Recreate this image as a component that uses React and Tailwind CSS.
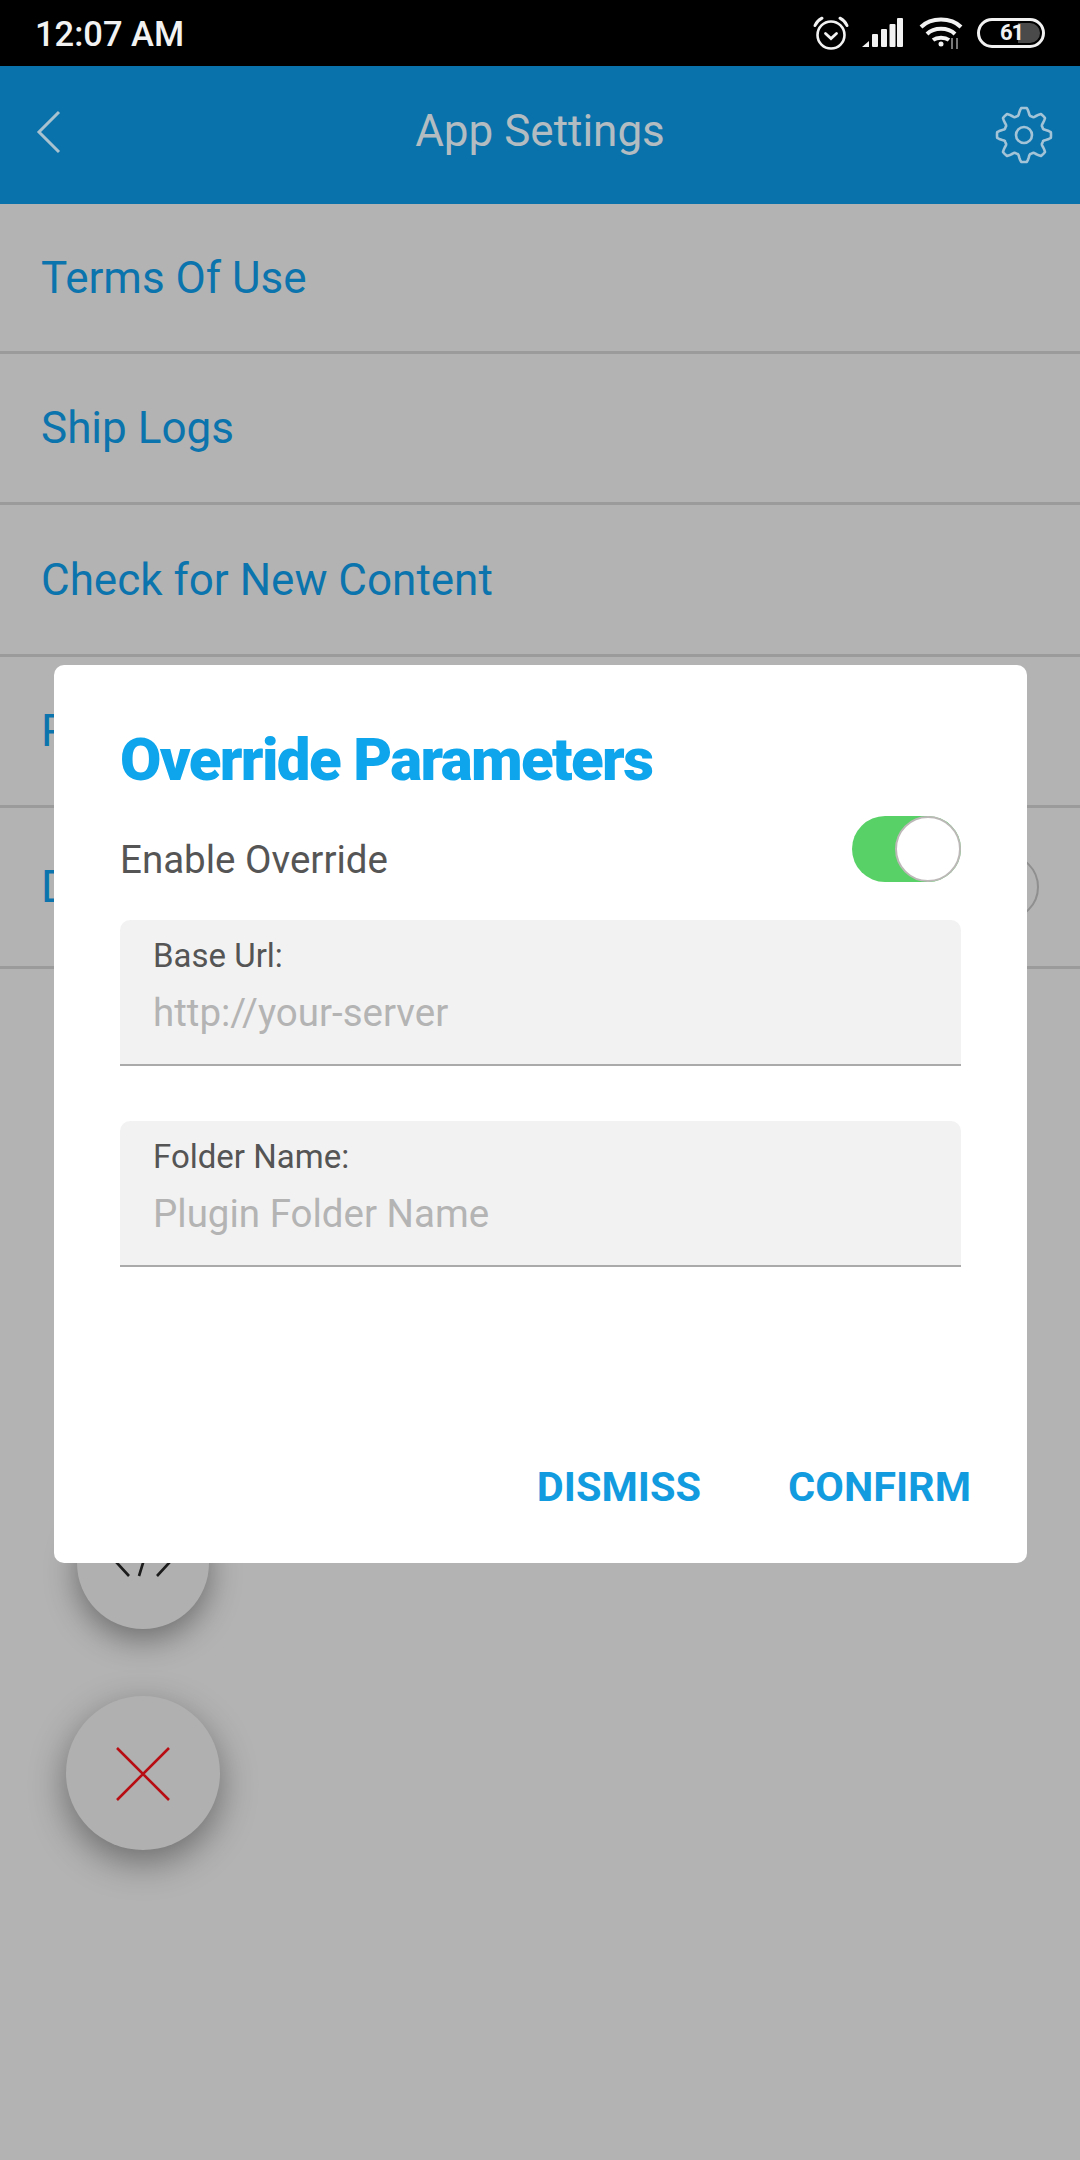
import { useMemo } from "react";

const rows = [
  { label: "Terms Of Use", height: "h-[150px]" },
  { label: "Ship Logs", height: "h-[151px]" },
  { label: "Check for New Content", height: "h-[152px]" },
  { label: "P", height: "h-[151px]" },
];

function gearPath() {
  // 8 rounded teeth around (28, 28)
  let d = "";
  for (let i = 0; i <= 360; i += 3) {
    const a = (i * Math.PI) / 180;
    const wave = Math.max(-1, Math.min(1, Math.cos(8 * a) * 1.5));
    const r = 23.5 + wave * 3.5;
    const x = 28 + r * Math.sin(a);
    const y = 28 - r * Math.cos(a);
    d += `${i === 0 ? "M" : "L"}${x.toFixed(2)} ${y.toFixed(2)} `;
  }
  return d + "Z";
}

function Gear() {
  const d = useMemo(() => gearPath(), []);
  return (
    <svg width="58" height="58" viewBox="-1 -1 58 58" fill="none" stroke="#a3c3d6" strokeWidth="2.6">
      <path d={d} strokeLinejoin="round" />
      <circle cx="28" cy="28" r="8" />
    </svg>
  );
}

function StatusIcons() {
  return (
    <div className="flex items-center">
      <svg width="36" height="34" viewBox="0 0 36 34" fill="none" stroke="#f2f2f2" strokeWidth="2.6" strokeLinecap="round">
        <circle cx="18" cy="19" r="13.5" />
        <path d="M12.5 17.5l5.5 5 5.5-5" strokeWidth="2.8" />
        <path d="M2 9.5C3.5 6 5.500 4 9 2.200" strokeWidth="3" />
        <path d="M34 9.5C32.500 6 30.500 4 27 2.200" strokeWidth="3" />
      </svg>
      <svg className="ml-[13px]" width="41" height="30" viewBox="0 0 41 30" fill="#f2f2f2">
        <path d="M0 29l7-6v6z" />
        <rect x="10" y="16" width="6" height="13" rx="1" />
        <rect x="19" y="11" width="6" height="18" rx="1" />
        <rect x="27.500" y="6" width="6" height="23" rx="1" />
        <rect x="35" y="0" width="6" height="29" rx="1" />
      </svg>
      <svg className="ml-[16px]" width="44" height="32" viewBox="0 0 44 32" fill="none" stroke="#f2f2f2" strokeWidth="4">
        <path d="M2 10C12 0 32 0 42 10" />
        <path d="M8 17C15 10 29 10 36 17" />
        <path d="M14 23C18 20 26 20 30 23" />
        <circle cx="22" cy="27" r="2.500" fill="#f2f2f2" stroke="none" />
        <path d="M33 21v11M38 21v11" stroke="#777" strokeWidth="2" />
      </svg>
      <div className="relative ml-[14px] h-[30px] w-[68px] overflow-hidden rounded-full border-[3px] border-[#f2f2f2]">
        <div className="absolute bottom-[2px] right-[2px] top-[2px] w-[22px] rounded-r-full bg-[#4a4a4a]" />
        <span className="absolute left-[20px] top-0 text-[22px] font-bold leading-[24px] tracking-[-1px] text-[#f2f2f2]">61</span>
      </div>
    </div>
  );
}

export default function App() {
  return (
    <div className="relative h-[2160px] w-[1080px] overflow-hidden bg-[#b3b3b3] font-['Roboto',sans-serif]">
      <div className="flex h-[66px] items-center justify-between bg-black pl-[35px] pr-[35px]">
        <span className="mt-[3px] text-[34.500px] font-medium text-[#f2f2f2]">12:07 AM</span>
        <StatusIcons />
      </div>

      <div className="grid h-[138px] grid-cols-[1fr_auto_1fr] items-center bg-[#0a72ab] px-[27px]">
        <svg className="mb-[6px] ml-[9px]" width="26" height="44" viewBox="0 0 26 44" fill="none" stroke="#a9c2d0" strokeWidth="3">
          <path d="M23 2L3 22l20 20" />
        </svg>
        <span className="mb-[9px] text-[44px] text-[#b3bcc1]">App Settings</span>
        <div className="flex justify-end">
          <Gear />
        </div>
      </div>

      {rows.map((row) => (
        <div key={row.label} className={`flex ${row.height} items-center border-b-[3px] border-[#9b9b9b] pl-[41px] text-[44px] text-[#0c74ad]`}>
          {row.label}
        </div>
      ))}
      <div className="flex h-[161px] items-center justify-between border-b-[3px] border-[#9b9b9b] pl-[41px] pr-[41px] text-[44px] text-[#0c74ad]">
        <span>D</span>
        <div className="h-[66px] w-[66px] rounded-full border-2 border-[#8f8f8f]" />
      </div>

      <div className="absolute left-[77px] top-[1497px] flex h-[132px] w-[132px] items-center justify-center rounded-full bg-[#b0b0b0] shadow-[0_10px_32px_rgba(0,0,0,0.4)]">
        <svg width="56" height="28" viewBox="0 0 56 28" fill="none" stroke="#1c1c1c" strokeWidth="2.6">
          <path d="M14 1L2 14l12 13M42 1l12 13-12 13M32 1l-8 26" />
        </svg>
      </div>
      <div className="absolute left-[66px] top-[1696px] flex h-[154px] w-[154px] items-center justify-center rounded-full bg-[#b0b0b0] shadow-[0_12px_36px_rgba(0,0,0,0.4)]">
        <svg className="mt-[2px]" width="54" height="54" viewBox="0 0 54 54" fill="none" stroke="#b80d12" strokeWidth="2.6">
          <path d="M1 1l52 52M53 1L1 53" />
        </svg>
      </div>

      <div className="absolute left-[54px] top-[665px] flex h-[898px] w-[973px] flex-col rounded-[10px] bg-white pl-[66px] pr-[66px]">
        <h1 className="mt-[58px] text-[60px] font-black leading-[74px] tracking-[-1.650px] text-[#0ea5ec]">Override Parameters</h1>
        <div className="mt-[19px] flex h-[66px] items-center justify-between">
          <span className="mt-[22px] text-[38.500px] text-[#555555]">Enable Override</span>
          <div className="relative h-[66px] w-[109px] rounded-full bg-[#58d267]">
            <div className="absolute right-0 top-0 h-[66px] w-[66px] rounded-full border-2 border-[#bdb8b8] bg-white" />
          </div>
        </div>

        <div className="mt-[38px] h-[146px] rounded-t-[10px] border-b-2 border-[#aaaaaa] bg-[#f2f2f2] pl-[33px] pt-[16px]">
          <div className="text-[33px] leading-[40px] text-[#555555]">Base Url:</div>
          <div className="mt-[15px] text-[38.500px] leading-[44px] text-[#b4b4b4]">http://your-server</div>
        </div>
        <div className="mt-[55px] h-[146px] rounded-t-[10px] border-b-2 border-[#aaaaaa] bg-[#f2f2f2] pl-[33px] pt-[16px]">
          <div className="text-[33px] leading-[40px] text-[#555555]">Folder Name:</div>
          <div className="mt-[15px] text-[38.500px] leading-[44px] text-[#b4b4b4]">Plugin Folder Name</div>
        </div>

        <div className="mt-[195px] flex justify-end gap-[87px] text-[41.500px] font-bold leading-[50px] text-[#129cdf]">
          <span>DISMISS</span>
          <span className="-mr-[10px]">CONFIRM</span>
        </div>
      </div>
    </div>
  );
}
